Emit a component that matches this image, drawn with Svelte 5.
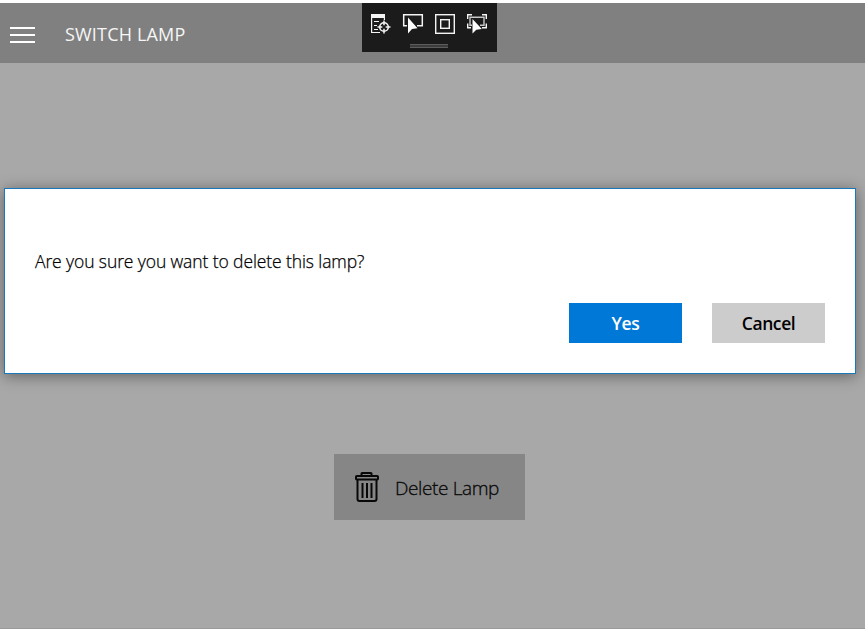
<script>
  let dialogOpen = $state(true);
  const close = () => (dialogOpen = false);
</script>

<div class="window">
  <header>
    <button class="menu" aria-label="Menu"><i></i><i></i><i></i></button>
    <h1>SWITCH LAMP</h1>
  </header>

  <main>
    <button class="delete" onclick={() => (dialogOpen = true)}>
      <svg width="26" height="32" viewBox="0 0 26 32" fill="none" stroke="#080808" stroke-width="2">
        <path d="M7.5 5V2.6Q7.5 2 8.1 2H16.9Q17.5 2 17.5 2.6V5" />
        <rect x="2" y="5" width="22" height="3.6" rx=".8" />
        <path d="M3.5 8.5V28Q3.5 30 5.5 30H20.5Q22.5 30 22.5 28V8.5" />
        <path d="M8.5 12V27M13 12V27M17.5 12V27" stroke-width="2" />
      </svg>
      <span>Delete Lamp</span>
    </button>
  </main>

  <div class="debug">
    <div class="tools">
      <svg width="22" height="22" viewBox="0 0 22 22" fill="none" stroke="#f4f4f4">
        <path d="M1 1H15V5H1Z" fill="#f4f4f4" stroke="none" />
        <path d="M1.6 4V19.5H10M14.4 4V7M4 8.5H9M4 12.5H7M4 16.5H8" stroke-width="1.2" />
        <circle cx="14" cy="14" r="4.3" stroke-width="1.6" />
        <path d="M14 7.5V12.3M14 15.7V20.5M7.5 14H12.3M15.7 14H20.5" stroke-width="1.5" />
      </svg>
      <svg width="22" height="22" viewBox="0 0 22 22">
        <path d="M5 12.7H1.7V1.7H20.3V12.7H15" fill="none" stroke="#f4f4f4" stroke-width="1.5" />
        <path d="M6 4.5V20.5L10 16L15.5 15.2Z" fill="#fff" />
      </svg>
      <svg width="22" height="22" viewBox="0 0 22 22" fill="none" stroke="#f4f4f4" stroke-width="1.4">
        <rect x="1.7" y="1.7" width="18.6" height="18.6" />
        <rect x="6.7" y="6.7" width="8.6" height="8.6" />
      </svg>
      <svg width="22" height="22" viewBox="0 0 22 22" fill="none">
        <path d="M1.7 6V1.7H6M16 1.7H20.3V6M20.3 10.5V14.7H16M5 14.7H1.7V10.5" stroke="#f4f4f4" stroke-width="1.4" />
        <path d="M6 12.3H4V4.2H18V12.3H14" stroke="#c8c8c8" stroke-width="1.4" />
        <path d="M6.5 6V20.5L10.3 16.8L15.8 16Z" fill="#fff" />
      </svg>
    </div>
    <div class="grip"></div>
  </div>

  {#if dialogOpen}
    <div class="dialog" role="dialog" aria-modal="true">
      <p><span>Are you sure you want to delete this lamp?</span></p>
      <div class="actions">
        <button class="yes" onclick={close}>Yes</button>
        <button class="cancel" onclick={close}>Cancel</button>
      </div>
    </div>
  {/if}
</div>

<style>
  :global(body) { margin: 0; background: #fff; }
  * { box-sizing: border-box; }
  button { border: 0; padding: 0; margin: 0; font: inherit; }
  .window {
    position: relative;
    height: 629px;
    padding-top: 3px;
    display: flex;
    flex-direction: column;
    overflow: hidden;
    font-family: "Open Sans", "Noto Sans", sans-serif;
  }
  header {
    height: 60px;
    flex: none;
    display: flex;
    align-items: center;
    gap: 30px;
    padding: 4px 0 0 10px;
    background: #808080;
  }
  .menu {
    width: 25px;
    display: flex;
    flex-direction: column;
    gap: 5px;
    background: none;
  }
  .menu i { height: 2px; background: #fff; }
  h1 {
    margin: 0 0 2px;
    font-size: 18px;
    line-height: 24px;
    font-weight: 400;
    letter-spacing: 0.18px;
    color: #f6f6f6;
    white-space: nowrap;
  }
  main {
    flex: 1;
    display: flex;
    justify-content: center;
    align-items: flex-start;
    padding: 391px 6px 0 0;
    background: #a8a8a8;
    border-bottom: 1px solid #999;
  }
  .delete {
    width: 191px;
    height: 66px;
    display: flex;
    align-items: center;
    gap: 15px;
    padding-left: 20px;
    background: #868686;
    color: #080808;
    font-size: 19px;
    font-weight: 300;
    white-space: nowrap;
  }
  .delete span {
    padding-top: 2px;
    letter-spacing: -0.38px;
    -webkit-text-stroke: 0.3px #080808;
  }
  .debug {
    position: absolute;
    left: 362px;
    top: 3px;
    width: 135px;
    height: 49px;
    padding: 10px 0 0 8px;
    background: #1b1b1b;
  }
  .tools { display: flex; gap: 10px; }
  .tools svg { display: block; flex: none; }
  .grip {
    width: 38px;
    height: 4px;
    margin: 9px 0 0 40px;
    border: solid #5c5c5c;
    border-width: 1px 0;
    background: #3c3c3c;
  }
  .dialog {
    position: absolute;
    left: 4px;
    top: 188px;
    width: 852px;
    height: 186px;
    padding: 59px 30px 0;
    border: 1px solid #1b78b8;
    background: #fff;
    box-shadow: 0 2px 14px rgba(0, 0, 0, .42);
  }
  p {
    margin: 0;
    height: 55px;
    font-size: 17.5px;
    font-weight: 300;
    line-height: 26px;
    letter-spacing: -0.1px;
    color: #000;
    -webkit-text-stroke: 0.25px #000;
    white-space: nowrap;
  }
  .actions { display: flex; justify-content: flex-end; gap: 30px; }
  .actions button {
    width: 113px;
    height: 40px;
    padding-bottom: 1px;
    font-size: 17.5px;
    font-weight: 600;
    letter-spacing: -0.4px;
  }
  .actions .yes { background: #0078d7; color: #fff; }
  .actions .cancel { background: #ccc; color: #000; }
</style>
